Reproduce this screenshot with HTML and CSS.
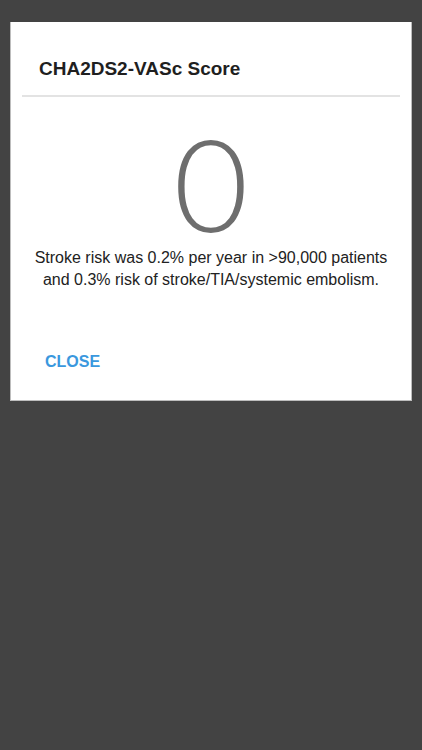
FILE: index.html
```html
<!DOCTYPE html>
<html>
<head>
<meta charset="utf-8">
<link rel="stylesheet" href="styles.css">
</head>
<body>
<div class="dialog">
  <div class="header">
    <h1 class="title">CHA2DS2-VASc Score</h1>
  </div>
  <div class="divider"></div>
  <div class="body">
    <div class="score">0</div>
    <p class="desc">Stroke risk was 0.2% per year in &gt;90,000 patients<br>and 0.3% risk of stroke/TIA/systemic embolism.</p>
  </div>
  <div class="actions">
    <button class="close">CLOSE</button>
  </div>
</div>
</body>
</html>
```

FILE: styles.css
```css
html, body {
  margin: 0;
  padding: 0;
  height: 100%;
}
body {
  background: #434343;
  font-family: "Liberation Sans", Arial, sans-serif;
  padding-top: 22px;
  box-sizing: border-box;
}
.dialog {
  margin: 0 10px;
  background: #fff;
  border: 1px solid #bdbdbd;
  border-top: none;
}
.header {
  padding: 36px 28px 15px;
}
.title {
  margin: 0;
  font-size: 19px;
  line-height: 22px;
  font-weight: bold;
  color: #1f1f1f;
}
.divider {
  height: 2px;
  background: #e3e3e3;
  margin: 0 11px;
}
.body {
  text-align: center;
}
.score {
  font-family: Lato, "Open Sans", sans-serif;
  font-weight: 300;
  font-size: 129px;
  line-height: 130px;
  color: #6e6e6e;
  margin-top: 20px;
}
.desc {
  margin: 0;
  font-size: 16px;
  line-height: 22px;
  color: #222;
}
.actions {
  padding: 60px 0 27px 34px;
}
.close {
  background: none;
  border: none;
  padding: 0;
  font-family: "Liberation Sans", Arial, sans-serif;
  font-weight: bold;
  font-size: 16px;
  line-height: 22px;
  color: #3a98de;
}
```
